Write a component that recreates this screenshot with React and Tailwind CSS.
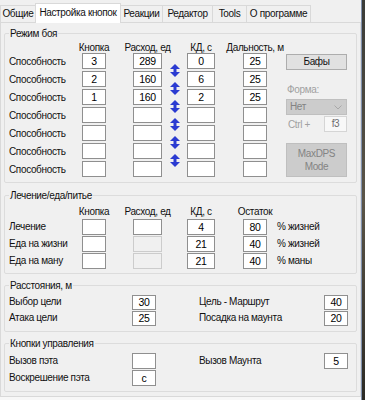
import React from 'react';

const tabs = [
  { t: 'Общие', w: 'w-[36px]' },
  { t: 'Настройка кнопок', w: 'w-[86px]' },
  { t: 'Реакции', w: 'w-[43px]' },
  { t: 'Редактор', w: 'w-[51px]' },
  { t: 'Tools', w: 'w-[35px]' },
  { t: 'О программе', w: 'w-[65px]' },
];

const combat = [
  { b: '3', r: '289', kd: '0', d: '25' },
  { b: '2', r: '160', kd: '6', d: '25' },
  { b: '1', r: '160', kd: '2', d: '25' },
  { b: '', r: '', kd: '', d: '' },
  { b: '', r: '', kd: '', d: '' },
  { b: '', r: '', kd: '', d: '' },
  { b: '', r: '', kd: '', d: '' },
];

const heal = [
  { label: 'Лечение', kd: '4', rest: '80', unit: '% жизней', off: false },
  { label: 'Еда на жизни', kd: '21', rest: '40', unit: '% жизней', off: true },
  { label: 'Еда на ману', kd: '21', rest: '40', unit: '% маны', off: true },
];

const Box = ({ value = '', w, h = 'h-[16px]', disabled }) => (
  <div
    className={`${w} ${h} shrink-0 border flex items-center justify-center text-[10.5px] leading-none ${
      disabled ? 'border-[#cccccc] bg-[#f0f0f0] text-[#8a8a8a]' : 'border-[#8f8f8f] bg-white text-black'
    }`}
  >
    {value}
  </div>
);

const Group = ({ title, className = '', children }) => (
  <fieldset className={`mx-[3px] border border-[#dcdcdc] rounded-[2px] ${className}`}>
    <legend className="ml-[4px] px-[1px] leading-[13px]">{title}</legend>
    {children}
  </fieldset>
);

const Arrow = () => (
  <svg width="10" height="13" viewBox="0 0 10 13">
    <polygon points="5,0 10,5 0,5" fill="#2b3bd1" />
    <rect x="3.5" y="5" width="3" height="3" fill="#2b3bd1" />
    <polygon points="0,8 10,8 5,13" fill="#2b3bd1" />
  </svg>
);

const Header = ({ text }) => (
  <div className="h-[11px] flex justify-center whitespace-nowrap leading-[11px]">{text}</div>
);

export default function App() {
  return (
    <div className="w-[365px] h-[400px] overflow-hidden flex bg-[#f0f0f0] text-[#111] text-[10px] tracking-[-0.35px] font-['Liberation_Sans',Arial,sans-serif]">
      <div className="w-[361px] flex flex-col">
        {/* tab headers */}
        <div className="h-[22px] flex items-end">
          {tabs.map(({ t, w }, i) =>
            i === 1 ? (
              <div key={t} className={`${w} h-[20px] mb-[-1px] bg-white border border-b-0 border-[#d9d9d9] flex items-center justify-center relative z-10 leading-none pb-[2px] -ml-px`}>
                {t}
              </div>
            ) : (
              <div key={t} className={`${w} h-[17px] bg-[#f0f0f0] border border-b-0 border-[#d9d9d9] flex items-center justify-center leading-none -ml-px first:ml-0`}>
                {t}
              </div>
            )
          )}
        </div>

        {/* tab page */}
        <div className="h-[375px] border border-[#d9d9d9] bg-[#f0f0f0] pt-[4px]">
          <Group title="Режим боя">
            <div className="flex pl-[4px] pt-[2px] pb-[3px]">
              <div className="w-[73px] flex flex-col">
                <div className="h-[11px]" />
                {combat.map((_, i) => (
                  <div key={i} className="h-[18px] leading-[17px] whitespace-nowrap">Способность</div>
                ))}
              </div>
              <div className="w-[24px] flex flex-col">
                <Header text="Кнопка" />
                {combat.map((r, i) => (
                  <div key={i} className="h-[18px]"><Box w="w-[24px]" value={r.b} /></div>
                ))}
              </div>
              <div className="w-[27px]" />
              <div className="w-[29px] flex flex-col">
                <Header text="Расход, ед" />
                {combat.map((r, i) => (
                  <div key={i} className="h-[18px]"><Box w="w-[29px]" value={r.r} /></div>
                ))}
              </div>
              <div className="w-[25px] flex flex-col items-center pt-[19px]">
                {[0, 1, 2, 3, 4, 5].map((i) => (
                  <div key={i} className="h-[18px] flex items-center"><Arrow /></div>
                ))}
              </div>
              <div className="w-[28px] flex flex-col">
                <Header text="КД, с" />
                {combat.map((r, i) => (
                  <div key={i} className="h-[18px]"><Box w="w-[28px]" value={r.kd} /></div>
                ))}
              </div>
              <div className="w-[28px]" />
              <div className="w-[24px] flex flex-col">
                <Header text="Дальность, м" />
                {combat.map((r, i) => (
                  <div key={i} className="h-[18px]"><Box w="w-[24px]" value={r.d} /></div>
                ))}
              </div>
              <div className="w-[19px]" />
              <div className="w-[61px] flex flex-col pt-[12px]">
                <div className="h-[16px] bg-[#e1e1e1] border border-[#adadad] flex items-center justify-center leading-none">Бафы</div>
                <div className="mt-[13px] h-[13px] leading-[13px] pl-[1px] text-[#a0a0a0]">Форма:</div>
                <div className="mt-[3px] h-[16px] bg-[#cccccc] border border-[#bfbfbf] flex items-center justify-between pl-[3px] pr-[4px] text-[#838383] leading-none">
                  <span>Нет</span>
                  <svg width="8" height="5" viewBox="0 0 8 5"><polyline points="0.5,0.5 4,4 7.5,0.5" fill="none" stroke="#a8a8a8" strokeWidth="1" /></svg>
                </div>
                <div className="mt-[1px] h-[16px] flex items-center justify-between">
                  <span className="pl-[2px] text-[#a0a0a0]">Ctrl +</span>
                  <div className="w-[23px] h-[16px] bg-[#f8f8f8] border border-[#d5d5d5] flex items-center justify-center text-[#6d6d6d] leading-none">f3</div>
                </div>
                <div className="mt-[11px] h-[34px] bg-[#cccccc] border border-[#bfbfbf] flex items-center justify-center text-center text-[#838383] leading-[13px]">
                  MaxDPS<br />Mode
                </div>
              </div>
            </div>
          </Group>

          <Group title="Лечение/еда/питье" className="mt-[6px]">
            <div className="pl-[4px] pt-[4px] pb-[3px]">
              <div className="flex">
                <div className="w-[73px]" />
                <div className="w-[24px]"><Header text="Кнопка" /></div>
                <div className="w-[27px]" />
                <div className="w-[29px]"><Header text="Расход, ед" /></div>
                <div className="w-[25px]" />
                <div className="w-[28px]"><Header text="КД, с" /></div>
                <div className="w-[28px]" />
                <div className="w-[24px]"><Header text="Остаток" /></div>
              </div>
              <div className="mt-[2px] flex flex-col">
                {heal.map((r) => (
                  <div key={r.label} className="h-[17px] flex">
                    <div className="w-[73px] leading-[16px] whitespace-nowrap">{r.label}</div>
                    <Box w="w-[24px]" />
                    <div className="w-[27px]" />
                    <Box w="w-[29px]" disabled={r.off} />
                    <div className="w-[25px]" />
                    <Box w="w-[28px]" value={r.kd} />
                    <div className="w-[28px]" />
                    <Box w="w-[24px]" value={r.rest} />
                    <div className="pl-[10px] leading-[16px] whitespace-nowrap">{r.unit}</div>
                  </div>
                ))}
              </div>
            </div>
          </Group>

          <Group title="Расстояния, м" className="mt-[5px]">
            <div className="pl-[4px] pt-[3px] pb-[4px] flex flex-col">
              {[
                ['Выбор цели', '30', 'Цель - Маршрут', '40'],
                ['Атака цели', '25', 'Посадка на маунта', '20'],
              ].map(([a, av, b, bv]) => (
                <div key={a} className="h-[16px] flex">
                  <div className="w-[123px] leading-[14px]">{a}</div>
                  <Box w="w-[24px]" h="h-[15px]" value={av} />
                  <div className="w-[43px]" />
                  <div className="w-[125px] leading-[14px]">{b}</div>
                  <Box w="w-[24px]" h="h-[15px]" value={bv} />
                </div>
              ))}
            </div>
          </Group>

          <Group title="Кнопки управления" className="mt-[5px]">
            <div className="pl-[4px] pt-[3px] pb-[4px] flex flex-col">
              <div className="h-[17px] flex">
                <div className="w-[123px] leading-[15px]">Вызов пэта</div>
                <Box w="w-[24px]" />
                <div className="w-[43px]" />
                <div className="w-[125px] leading-[15px]">Вызов Маунта</div>
                <Box w="w-[24px]" value="5" />
              </div>
              <div className="h-[17px] flex">
                <div className="w-[123px] leading-[15px]">Воскрешение пэта</div>
                <Box w="w-[24px]" value="с" />
              </div>
            </div>
          </Group>
        </div>
        <div className="h-[3px] bg-[#f7f7f7]" />
      </div>
      <div className="w-px bg-[#8191ad]" />
      <div className="flex-1 bg-gradient-to-b from-[#3b3c38] via-[#5b5548] to-[#2c2a24]" />
    </div>
  );
}
